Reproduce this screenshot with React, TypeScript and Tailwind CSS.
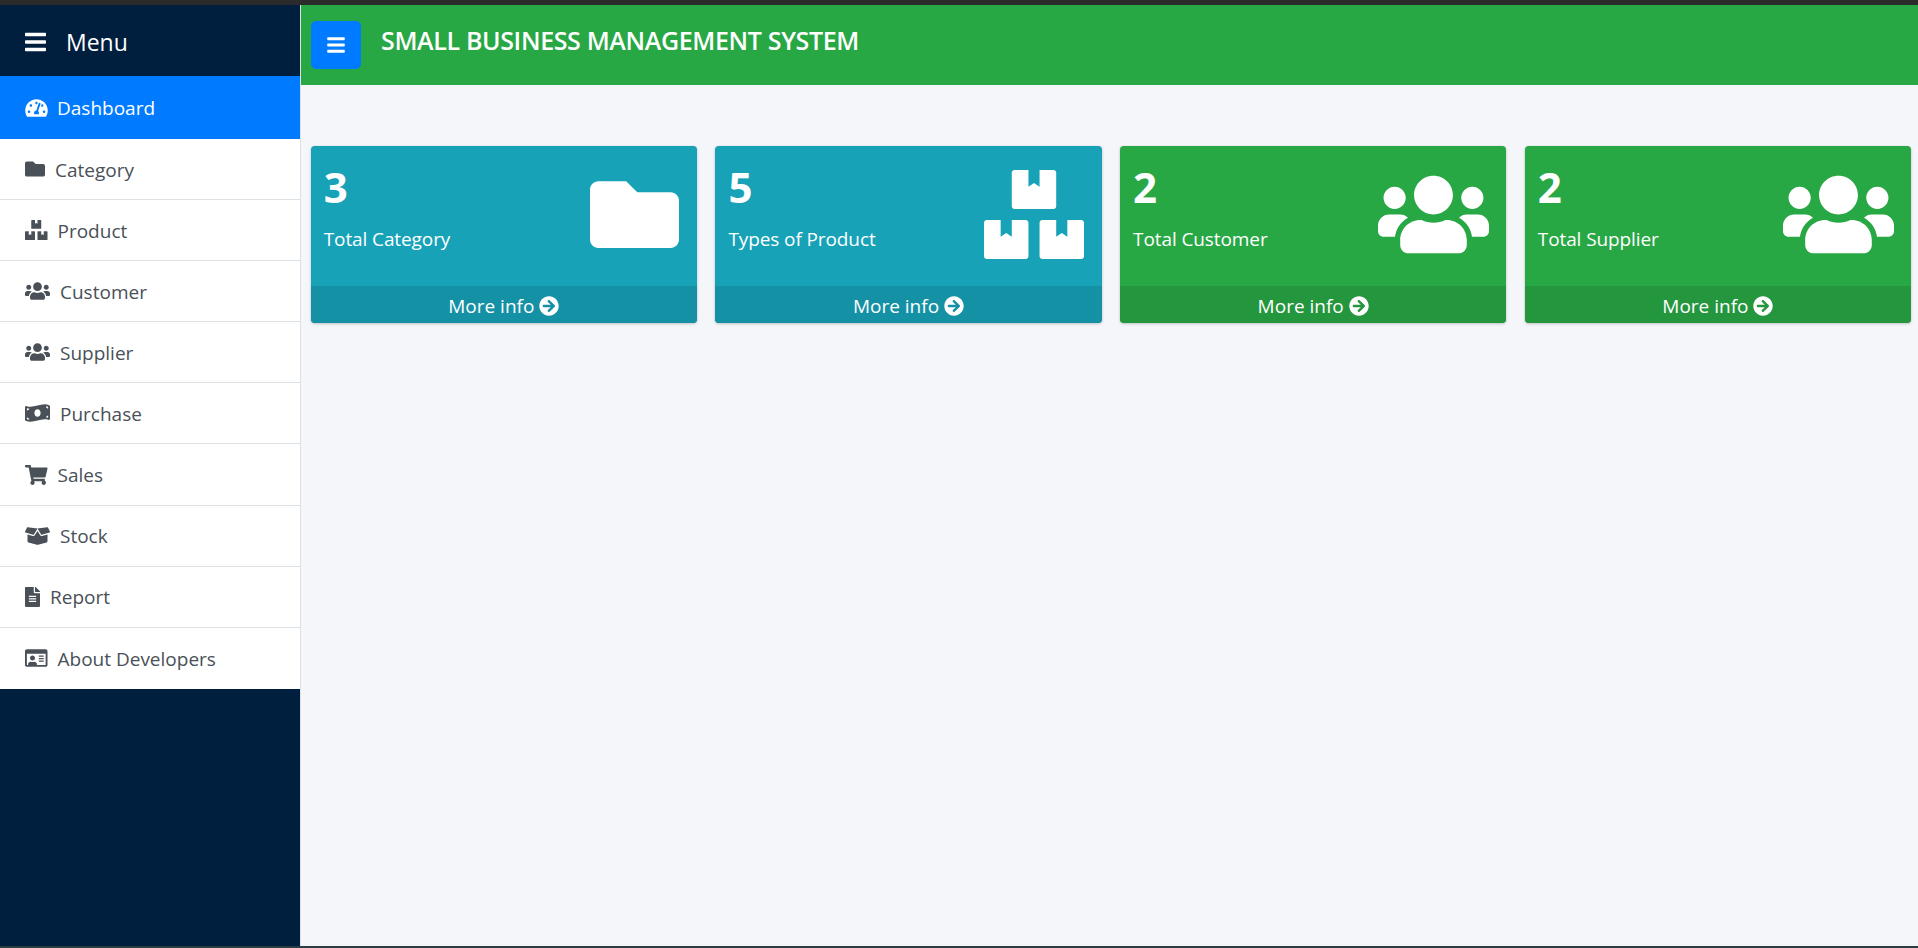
import {
  FaArrowCircleRight,
  FaBars,
  FaBoxOpen,
  FaBoxes,
  FaFileAlt,
  FaFolder,
  FaMoneyBillWave,
  FaRegIdCard,
  FaShoppingCart,
  FaTachometerAlt,
  FaUsers,
} from "react-icons/fa";

const menuItems = [
  { label: "Category", icon: FaFolder, iconClass: "w-5 h-5" },
  { label: "Product", icon: FaBoxes, iconClass: "w-[22.5px] h-5" },
  { label: "Customer", icon: FaUsers, iconClass: "w-[25px] h-5" },
  { label: "Supplier", icon: FaUsers, iconClass: "w-[25px] h-5" },
  { label: "Purchase", icon: FaMoneyBillWave, iconClass: "w-[25px] h-5" },
  { label: "Sales", icon: FaShoppingCart, iconClass: "w-[22.5px] h-5" },
  { label: "Stock", icon: FaBoxOpen, iconClass: "w-[25px] h-5" },
  { label: "Report", icon: FaFileAlt, iconClass: "w-[15px] h-5" },
  { label: "About Developers", icon: FaRegIdCard, iconClass: "w-[22.5px] h-5" },
];

const cards = [
  { count: 3, label: "Total Category", icon: FaFolder, iconClass: "w-[89px]", bg: "bg-[#17a2b8]", footer: "bg-[#1591a5]" },
  { count: 5, label: "Types of Product", icon: FaBoxes, iconClass: "w-[100px]", bg: "bg-[#17a2b8]", footer: "bg-[#1591a5]" },
  { count: 2, label: "Total Customer", icon: FaUsers, iconClass: "w-[111px]", bg: "bg-[#28a745]", footer: "bg-[#24963e]" },
  { count: 2, label: "Total Supplier", icon: FaUsers, iconClass: "w-[111px]", bg: "bg-[#28a745]", footer: "bg-[#24963e]" },
];

function Sidebar() {
  return (
    <aside className="w-[301px] shrink-0 bg-[#001f3f] border-r border-[#dee2e6]">
      <div className="h-[71px] flex items-center pl-[25px] pt-[3px] gap-[20px] text-white">
        <FaBars className="w-[21px] h-6" />
        <span className="text-[23px]">Menu</span>
      </div>
      <div className="h-[63px] flex items-center pl-[25px] gap-[9px] bg-[#007bff] text-white">
        <FaTachometerAlt className="w-[23px] h-5" />
        <span className="text-[19px] pt-[1px]">Dashboard</span>
      </div>
      <nav className="bg-white">
        {menuItems.map((item, i) => {
          const Icon = item.icon;
          return (
            <div
              key={item.label}
              className={
                i < menuItems.length - 1
                  ? "h-[61.1px] flex items-center pl-[25px] gap-[10px] text-[#495057] border-b-[1.5px] border-[#dee2e6]"
                  : "h-[61.1px] flex items-center pl-[25px] gap-[10px] text-[#495057]"
              }
            >
              <Icon className={item.iconClass} />
              <span className="text-[19px] pt-[2px]">{item.label}</span>
            </div>
          );
        })}
      </nav>
    </aside>
  );
}

export default function App() {
  return (
    <div className="h-screen flex flex-col bg-[#f4f6f9] font-['Open_Sans','Noto_Sans',sans-serif] overflow-hidden">
      <div className="h-[5px] shrink-0 bg-[#2b2b2b]" />
      <div className="flex-1 flex min-h-0">
        <Sidebar />
        <main className="flex-1 min-w-0">
          <header className="h-[80px] bg-[#28a745] flex items-center pl-[10px] gap-[20px] text-white">
            <button className="w-[50px] h-[48px] flex items-center justify-center rounded-[5px] bg-[#007bff]">
              <FaBars className="w-[18px] h-5" />
            </button>
            <h1 className="text-[25px] font-semibold tracking-[-0.35px] mb-[8px]">SMALL BUSINESS MANAGEMENT SYSTEM</h1>
          </header>
          <section className="grid grid-cols-4 gap-[18.5px] pl-[9.7px] pr-[7px] mt-[61px]">
            {cards.map((card) => {
              const Icon = card.icon;
              return (
                <div
                  key={card.label}
                  className={`${card.bg} rounded-[4px] overflow-hidden text-white shadow-[0_0_1px_rgba(0,0,0,0.125),0_1px_3px_rgba(0,0,0,0.2)]`}
                >
                  <div className="h-[140px] flex justify-between pl-[13px] pr-[17.5px]">
                    <div>
                      <div className="text-[42px] font-bold leading-[56px] mt-[13px]">{card.count}</div>
                      <div className="text-[19px] tracking-[-0.1px] mt-[10px]">{card.label}</div>
                    </div>
                    <Icon className={`${card.iconClass} h-[89px] mt-[24px]`} />
                  </div>
                  <div className={`${card.footer} h-[37px] pt-[2px] flex items-center justify-center gap-[5px]`}>
                    <span className="text-[19px] pt-[1px]">More info</span>
                    <FaArrowCircleRight className="w-5 h-5" />
                  </div>
                </div>
              );
            })}
          </section>
        </main>
      </div>
      <div className="h-[2px] shrink-0 bg-[#2a3d42]" />
    </div>
  );
}
